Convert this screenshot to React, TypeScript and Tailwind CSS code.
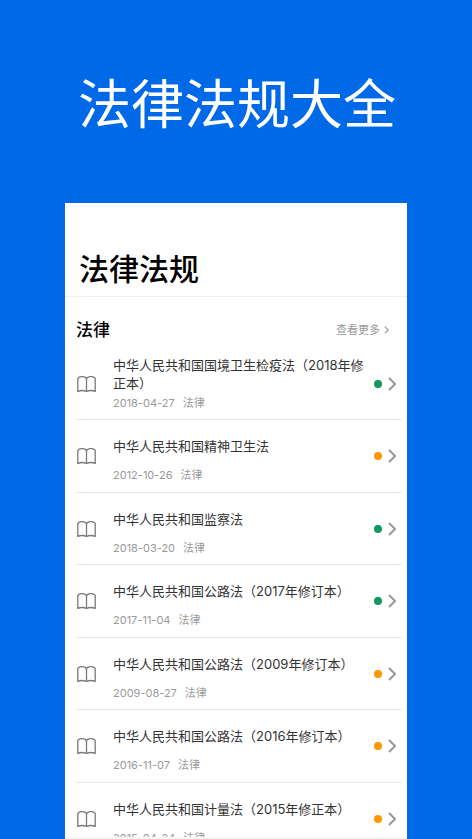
import React from 'react';

type Law = {
    title: string,
    date: string,
    valid: boolean,
};

const laws: Law[] = [
    { title: "中华人民共和国国境卫生检疫法（2018年修正本）", date: "2018-04-27", valid: true },
    { title: "中华人民共和国精神卫生法", date: "2012-10-26", valid: false },
    { title: "中华人民共和国监察法", date: "2018-03-20", valid: true },
    { title: "中华人民共和国公路法（2017年修订本）", date: "2017-11-04", valid: true },
    { title: "中华人民共和国公路法（2009年修订本）", date: "2009-08-27", valid: false },
    { title: "中华人民共和国公路法（2016年修订本）", date: "2016-11-07", valid: false },
    { title: "中华人民共和国计量法（2015年修正本）", date: "2015-04-24", valid: false },
];

const BookIcon: React.FC = () => (
    <svg className="w-5 h-5 shrink-0" viewBox="0 0 20 20" fill="none" stroke="#7a7a7a" strokeWidth="1.3" strokeLinecap="round" strokeLinejoin="round">
        <path d="M10.5 4.8C10 3.4 8.6 2.6 6.6 2.6H5.4C3.4 2.6 2.2 3.4 1.8 4.8V17.4C4.2 16.4 8 16.4 10.5 17.4C13 16.4 16.8 16.4 19.2 17.4V4.8C18.8 3.4 17.6 2.6 15.6 2.6H14.4C12.4 2.6 11 3.4 10.5 4.8Z" />
        <path d="M10.5 4.8V17.4" />
    </svg>
);

const Chevron: React.FC<{ className: string }> = ({ className }) => (
    <svg className={className} viewBox="0 0 8 14" fill="none" stroke="currentColor" strokeWidth="2">
        <path d="M1 1L7 7L1 13" />
    </svg>
);

const LawRow: React.FC<{ law: Law }> = ({ law }) => (
    <li className="odd:h-[72px] even:h-[73px] border-b border-[#e8e8e8]">
        <a href="#" className="h-full flex items-center pr-1.5">
            <BookIcon />
            <div className="flex-1 ml-[17px]">
                <div className="h-9 flex items-center text-[13px] leading-[18px] text-[#333333]">
                    <span>{law.title}</span>
                </div>
                <div className="mt-0.5 flex space-x-2 text-[11px] leading-[18px] text-[#9a9a9a]">
                    <span>{law.date}</span>
                    <span>法律</span>
                </div>
            </div>
            <span className={`w-2 h-2 rounded-full ${law.valid ? "bg-[#0f9960]" : "bg-[#ff9800]"}`}></span>
            <Chevron className="w-2 h-3.5 ml-1.5 text-[#999999]" />
        </a>
    </li>
);

const App = () => {
    return (
        <div className="h-screen overflow-hidden flex flex-col bg-[#0069e8] font-['Inter','Noto_Sans_CJK_SC',sans-serif]">
            <h1 className="pt-[65px] pb-[58px] pl-0.5 text-center text-[53px] leading-[80px] font-normal text-white">法律法规大全</h1>
            <main className="flex-1 min-h-0 mx-[65px] flex flex-col bg-white">
                <h2 className="h-[94px] shrink-0 pt-11 pl-3.5 text-[30px] leading-[44px] font-medium text-black border-b border-[#f0f0f0]">法律法规</h2>
                <section className="flex-1 min-h-0 overflow-hidden pl-[11px] pr-[5px]">
                    <div className="h-[51px] pt-3.5 pr-[13px] flex items-center justify-between">
                        <h3 className="text-[17px] leading-6 font-medium text-black">法律</h3>
                        <button className="flex items-center space-x-1 text-[11px] leading-4 text-[#999999]">
                            <span>查看更多</span>
                            <Chevron className="w-[5px] h-2" />
                        </button>
                    </div>
                    <ul>
                        {laws.map((law, index) => (
                            <LawRow key={index} law={law} />
                        ))}
                    </ul>
                </section>
                <div className="h-0.5 shrink-0 bg-[#f5f5f5]"></div>
            </main>
        </div>
    )
}

export default App;
